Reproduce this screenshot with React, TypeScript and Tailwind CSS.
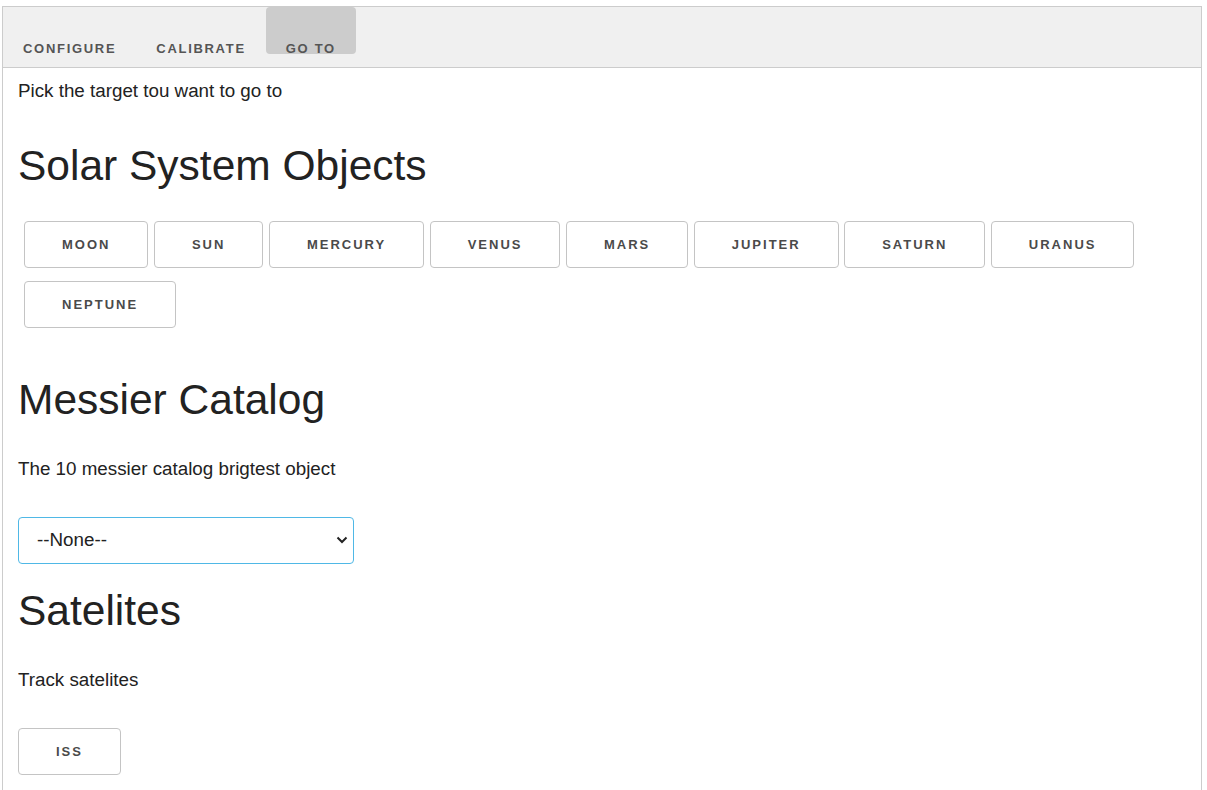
import React, { useState } from "react";

const planets = ["Moon", "Sun", "Mercury", "Venus", "Mars", "Jupiter", "Saturn", "Uranus", "Neptune"];
const tabs = ["Configure", "Calibrate", "Go to"];

function ObjButton({ label, className = "" }: { label: string; className?: string }) {
  return (
    <button
      className={
        "h-[47px] px-[37px] border border-[#c4c4c4] rounded-[4px] bg-white text-[13px] font-bold tracking-[2px] uppercase text-[#4a4a4a] " +
        className
      }
    >
      {label}
    </button>
  );
}

export default function App() {
  const [active, setActive] = useState("Go to");
  const [target, setTarget] = useState("");

  return (
    <div className="min-h-[790px] bg-white pt-[6px] pl-[2px] font-['Liberation_Sans',Arial,sans-serif] text-[#222]">
      <div className="w-[1200px] min-h-[784px] border-x border-t border-[#cccccc]">
        {/* tab bar */}
        <div className="flex h-[61px] bg-[#f0f0f0] border-b border-[#cccccc]">
          {tabs.map((t) => (
            <div
              key={t}
              onClick={() => setActive(t)}
              className={
                "h-[47px] px-[20px] pt-[35px] text-[13px] leading-[14px] font-bold tracking-[1.7px] uppercase text-[#555] rounded-[4px] cursor-pointer " +
                (active === t ? "bg-[#cccccc]" : "")
              }
            >
              {t}
            </div>
          ))}
        </div>

        {/* content */}
        <div className="pl-[15px]">
          <p className="mt-[12px] text-[18.8px] leading-[22px]">Pick the target tou want to go to</p>

          <h1 className="mt-[41px] text-[42.5px] leading-[46px]">Solar System Objects</h1>
          <div className="mt-[32px] ml-[6px] flex flex-wrap gap-x-[5.5px] gap-y-[13px] w-[1150px]">
            {planets.map((p) => (
              <ObjButton key={p} label={p} />
            ))}
          </div>

          <h1 className="mt-[49px] text-[42.5px] leading-[46px]">Messier Catalog</h1>
          <p className="mt-[35px] text-[18.8px] leading-[22px]">The 10 messier catalog brigtest object</p>
          <div className="relative mt-[37px] w-[336px]">
            <select
              value={target}
              onChange={(e) => setTarget(e.target.value)}
              className="appearance-none w-full h-[47px] pl-[18px] pr-[30px] text-[18.8px] text-[#222] bg-white border border-[#4fb8e6] rounded-[4px] outline-none"
            >
              <option value="">--None--</option>
              <option value="M31">M31 Andromeda</option>
              <option value="M42">M42 Orion Nebula</option>
              <option value="M45">M45 Pleiades</option>
            </select>
            <svg
              className="absolute right-[5px] top-[18px] pointer-events-none"
              width="14"
              height="10"
              viewBox="0 0 14 10"
            >
              <path d="M2.5 2.5 L7 7 L11.5 2.5" fill="none" stroke="#222" strokeWidth="2" />
            </svg>
          </div>

          <h1 className="mt-[24px] text-[42.5px] leading-[46px]">Satelites</h1>
          <p className="mt-[35px] text-[18.8px] leading-[22px]">Track satelites</p>
          <div className="mt-[37px] pb-[20px]">
            <ObjButton label="ISS" />
          </div>
        </div>
      </div>
    </div>
  );
}
